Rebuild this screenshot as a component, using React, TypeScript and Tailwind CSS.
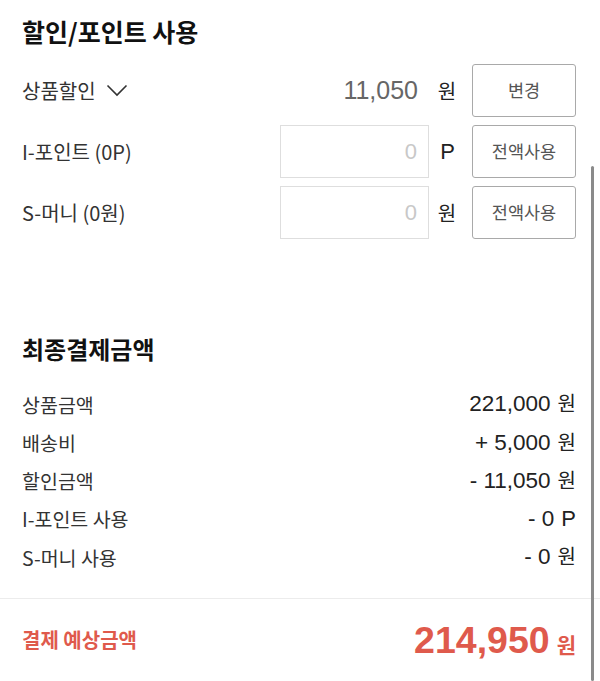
import React from 'react'

const kr = "font-['Noto_Sans_CJK_KR','Noto_Sans',sans-serif]"
const num = "font-['Liberation_Sans','Noto_Sans_CJK_KR',sans-serif]"

function Chevron() {
  return (
    <svg width="22" height="13" viewBox="0 0 22 13" fill="none" className="ml-[10px]">
      <path d="M1.5 1.5 L11 11 L20.5 1.5" stroke="#333" strokeWidth="1.6" />
    </svg>
  )
}

function ActionButton({ label }: { label: string }) {
  return (
    <button className="w-[104px] h-full rounded-[3px] border border-[#a9a9a9] bg-white text-[17.5px] text-[#555]">
      {label}
    </button>
  )
}

function InputBox() {
  return (
    <div className={`w-[149px] h-full border border-[#dedede] flex items-center justify-end pr-[11px] text-[22px] text-[#c8c8c8] ${num}`}>
      0
    </div>
  )
}

const summary = [
  { label: '상품금액', value: '221,000', unit: '원' },
  { label: '배송비', value: '+ 5,000', unit: '원' },
  { label: '할인금액', value: '- 11,050', unit: '원' },
  { label: 'I-포인트 사용', value: '- 0', unit: 'P' },
  { label: 'S-머니 사용', value: '- 0', unit: '원' },
]

export default function App() {
  return (
    <div className={`relative h-[681px] w-[600px] overflow-hidden bg-white text-[#222] ${kr}`}>
      <div className="pl-[22px] pr-[24px] pt-[15px]">
        <h2 className="h-[32px] leading-[32px] text-[25px] font-bold text-[#111]">할인/포인트 사용</h2>

        <div className="mt-[17px] flex flex-col gap-[8px]">
          <div className="flex h-[53px] items-center">
            <div className="flex flex-1 items-center text-[20px] text-[#333]">
              상품할인
              <Chevron />
            </div>
            <span className={`w-[149px] pr-[11px] text-right text-[25px] text-[#666] ${num}`}>11,050</span>
            <span className="w-[43px] pr-[7px] text-center text-[20px] text-[#222]">원</span>
            <ActionButton label="변경" />
          </div>
          <div className="flex h-[53px] items-center">
            <div className="flex-1 text-[20px] text-[#333]">I-포인트 (0P)</div>
            <InputBox />
            <span className={`w-[43px] pr-[6px] text-center text-[22px] text-[#222] ${num}`}>P</span>
            <ActionButton label="전액사용" />
          </div>
          <div className="flex h-[53px] items-center">
            <div className="flex-1 text-[20px] text-[#333]">S-머니 (0원)</div>
            <InputBox />
            <span className="w-[43px] pr-[7px] text-center text-[20px] text-[#222]">원</span>
            <ActionButton label="전액사용" />
          </div>
        </div>

        <h2 className="mt-[94px] h-[32px] leading-[32px] text-[24px] font-bold text-[#111]">최종결제금액</h2>

        <div className="mt-[20px] flex flex-col">
          {summary.map((row) => (
            <div key={row.label} className="flex h-[38.3px] items-center justify-between">
              <span className="text-[19.5px] text-[#333]">{row.label}</span>
              <span className="flex items-baseline gap-[7px]">
                <span className={`text-[22.5px] text-[#222] ${num}`}>{row.value}</span>
                <span className={row.unit === 'P' ? `text-[22px] text-[#222] ${num}` : 'text-[20px] text-[#222]'}>{row.unit}</span>
              </span>
            </div>
          ))}
        </div>
      </div>

      <div className="mt-[22px] border-t border-[#ececec] pl-[22px] pr-[24px]">
        <div className="flex h-[82px] items-center justify-between text-[#df5a4c]">
          <span className="text-[20px] font-semibold">결제 예상금액</span>
          <span className="flex items-baseline gap-[7px]">
            <span className={`text-[37.5px] font-bold ${num}`}>214,950</span>
            <span className="text-[21px] font-semibold">원</span>
          </span>
        </div>
      </div>

      <div className="absolute right-[6px] top-[166px] bottom-0 w-[3px] rounded-full bg-[#8a8a8a]" />
    </div>
  )
}
